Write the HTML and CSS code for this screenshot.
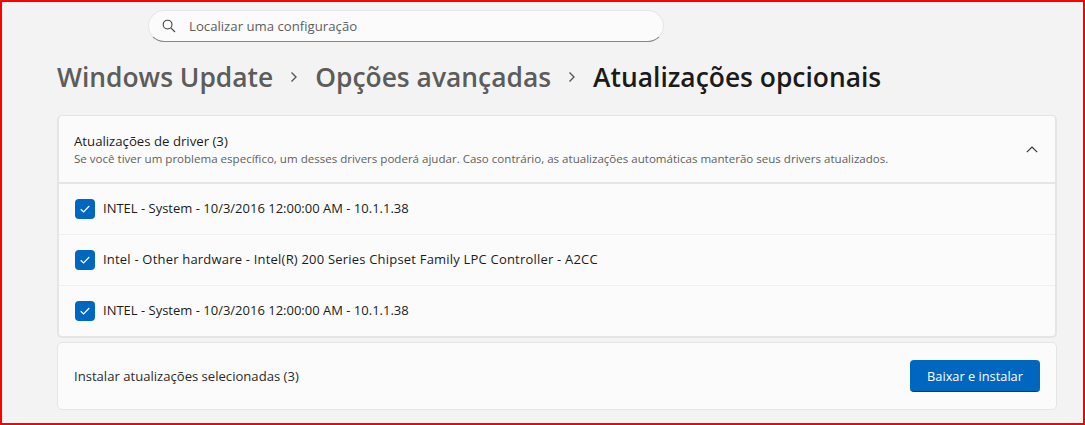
FILE: index.html
```html
<!DOCTYPE html>
<html lang="pt-BR">
<head>
    <meta charset="UTF-8">
    <meta name="viewport" content="width=device-width, initial-scale=1.0">
    <title>Atualizações opcionais</title>
    <link rel="stylesheet" href="styles.css">
</head>
<body>
    <div class="frame">
        <div class="search">
            <svg class="search-icon" width="14" height="14" viewBox="0 0 14 14" fill="none" stroke="#444" stroke-width="1.1">
                <circle cx="5.6" cy="5.6" r="4.4"/>
                <path d="M8.8 8.8L13 13"/>
            </svg>
            <span class="search-text">Localizar uma configuração</span>
        </div>

        <h1 class="crumbs">
            <span class="crumb">Windows Update</span>
            <svg class="crumb-sep" width="8" height="12" viewBox="0 0 8 12" fill="none" stroke="#555" stroke-width="1.4"><path d="M1.5 1.5L6 6L1.5 10.5"/></svg>
            <span class="crumb">Opções avançadas</span>
            <svg class="crumb-sep" width="8" height="12" viewBox="0 0 8 12" fill="none" stroke="#555" stroke-width="1.4"><path d="M1.5 1.5L6 6L1.5 10.5"/></svg>
            <span class="crumb current">Atualizações opcionais</span>
        </h1>

        <section class="card drivers">
            <div class="card-head">
                <div>
                    <div class="head-title">Atualizações de driver (3)</div>
                    <div class="head-sub">Se você tiver um problema específico, um desses drivers poderá ajudar. Caso contrário, as atualizações automáticas manterão seus drivers atualizados.</div>
                </div>
                <svg class="chevron" width="12" height="7" viewBox="0 0 12 7" fill="none" stroke="#333" stroke-width="1.1"><path d="M0.8 6.2L6 1L11.2 6.2"/></svg>
            </div>
            <div class="rows">
                <label class="row">
                    <span class="check"><svg width="10" height="8" viewBox="0 0 10 8" fill="none" stroke="#fff" stroke-width="1.2"><path d="M0.7 4.2L3.6 7L9.3 1"/></svg></span>
                    INTEL - System - 10/3/2016 12:00:00 AM - 10.1.1.38
                </label>
                <label class="row wide">
                    <span class="check"><svg width="10" height="8" viewBox="0 0 10 8" fill="none" stroke="#fff" stroke-width="1.2"><path d="M0.7 4.2L3.6 7L9.3 1"/></svg></span>
                    Intel - Other hardware - Intel(R) 200 Series Chipset Family LPC Controller - A2CC
                </label>
                <label class="row">
                    <span class="check"><svg width="10" height="8" viewBox="0 0 10 8" fill="none" stroke="#fff" stroke-width="1.2"><path d="M0.7 4.2L3.6 7L9.3 1"/></svg></span>
                    INTEL - System - 10/3/2016 12:00:00 AM - 10.1.1.38
                </label>
            </div>
        </section>

        <section class="card install">
            <span class="install-text">Instalar atualizações selecionadas (3)</span>
            <button class="install-btn">Baixar e instalar</button>
        </section>
    </div>
</body>
</html>
```

FILE: styles.css
```css
* {
    box-sizing: border-box;
    margin: 0;
    padding: 0;
    font-family: 'Open Sans', 'Noto Sans', sans-serif;
}

html, body {
    height: 100%;
    overflow: hidden;
}

.frame {
    height: 425px;
    border: 2px solid #ff0000;
    background: #f3f3f3;
    padding: 8px 27px 0 55px;
    color: #1b1b1b;
}

.search {
    width: 516px;
    height: 32px;
    margin-left: 91px;
    padding-left: 13px;
    display: flex;
    align-items: center;
    gap: 13px;
    background: #fbfbfb;
    border: 1px solid #e6e6e6;
    border-bottom-color: #868686;
    border-radius: 16px;
}

.search-text {
    font-size: 13.2px;
    color: #5f5f5f;
}

.crumbs {
    height: 73px;
    padding-bottom: 4px;
    display: flex;
    align-items: center;
    gap: 17px;
    font-size: 26.4px;
    font-weight: 600;
    white-space: nowrap;
}

.crumb {
    color: #5c5c5c;
}

.crumb.current {
    color: #1b1b1b;
}

.card {
    width: 1000px;
    background: #fbfbfb;
    border: 1px solid #e5e5e5;
    border-radius: 5px;
}

.drivers {
    height: 223px;
    border-bottom-width: 2px;
    border-right-width: 2px;
    border-left-width: 2px;
    margin-bottom: 4px;
    overflow: hidden;
}

.card-head {
    height: 68px;
    padding: 0 17px 0 15px;
    display: flex;
    align-items: center;
    justify-content: space-between;
    border-bottom: 2px solid #e5e5e5;
}

.head-title {
    font-size: 13.2px;
    line-height: 16px;
    margin-bottom: 2px;
}

.head-sub {
    font-size: 11.55px;
    line-height: 15px;
    color: #5f5f5f;
}

.row {
    height: 51px;
    padding: 0 0 2px 16px;
    display: flex;
    align-items: center;
    gap: 8px;
    font-size: 13px;
    border-bottom: 1px solid #f0f0f0;
}

.row.wide {
    letter-spacing: 0.2px;
}

.row:last-child {
    padding-bottom: 3px;
    border-bottom: none;
}

.check {
    width: 20px;
    height: 20px;
    margin-top: 2px;
    display: flex;
    align-items: center;
    justify-content: center;
    background: #0067c0;
    border-radius: 4px;
}

.install {
    height: 68px;
    padding: 0 16px;
    display: flex;
    align-items: center;
    justify-content: space-between;
}

.install-text {
    font-size: 13.1px;
    color: #2b2b2b;
}

.install-btn {
    width: 130px;
    height: 32px;
    background: #0067c0;
    border: none;
    border-bottom: 1px solid #003e73;
    border-radius: 4px;
    color: #fff;
    font-size: 12.8px;
}
```
